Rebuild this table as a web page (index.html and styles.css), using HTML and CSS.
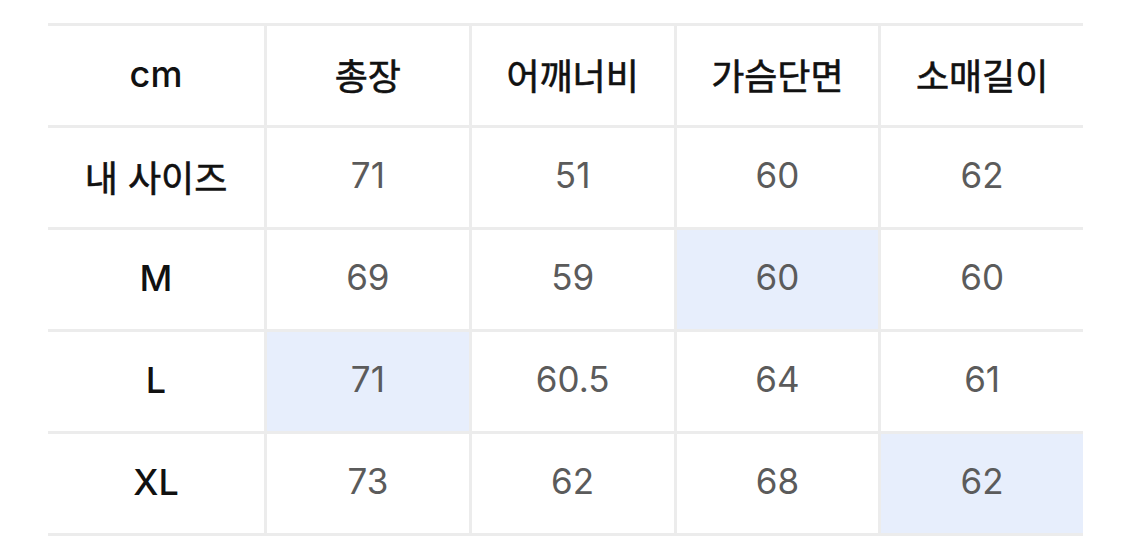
FILE: index.html
```html
<!DOCTYPE html>
<html lang="ko">
<head>
<meta charset="utf-8">
<link rel="stylesheet" href="styles.css">
</head>
<body>
<div class="size-table">
  <div class="cell head">cm</div>
  <div class="cell head ko">총장</div>
  <div class="cell head ko">어깨너비</div>
  <div class="cell head ko">가슴단면</div>
  <div class="cell head ko">소매길이</div>

  <div class="cell head ko">내 사이즈</div>
  <div class="cell">71</div>
  <div class="cell">51</div>
  <div class="cell">60</div>
  <div class="cell">62</div>

  <div class="cell head">M</div>
  <div class="cell">69</div>
  <div class="cell">59</div>
  <div class="cell hl">60</div>
  <div class="cell">60</div>

  <div class="cell head">L</div>
  <div class="cell hl">71</div>
  <div class="cell">60.5</div>
  <div class="cell">64</div>
  <div class="cell">61</div>

  <div class="cell head">XL</div>
  <div class="cell">73</div>
  <div class="cell">62</div>
  <div class="cell">68</div>
  <div class="cell hl">62</div>
</div>
</body>
</html>
```

FILE: styles.css
```css
html, body {
  margin: 0;
  padding: 0;
  background: #ffffff;
}
body {
  padding: 23px 42px 0 48px;
  font-family: "Inter", "Noto Sans CJK KR", sans-serif;
}
.size-table {
  width: 1035px;
  display: grid;
  grid-template-columns: 216px repeat(4, 1fr);
  grid-auto-rows: 99px;
  gap: 3px;
  padding: 3px 0;
  background: #ececec;
}
.cell {
  background: #ffffff;
  display: flex;
  align-items: center;
  justify-content: center;
  font-size: 35px;
  color: #5b5b5b;
  padding-bottom: 5px;
}
.cell.head {
  color: #111111;
  font-size: 36px;
  font-weight: 500;
  padding-bottom: 4px;
}
.cell.head.ko {
  font-family: "Noto Sans CJK KR", sans-serif;
  font-weight: 400;
  font-size: 36px;
  padding-bottom: 3px;
  -webkit-text-stroke: 0.6px #111111;
}
.cell.hl {
  background: #e7eefc;
}
```
